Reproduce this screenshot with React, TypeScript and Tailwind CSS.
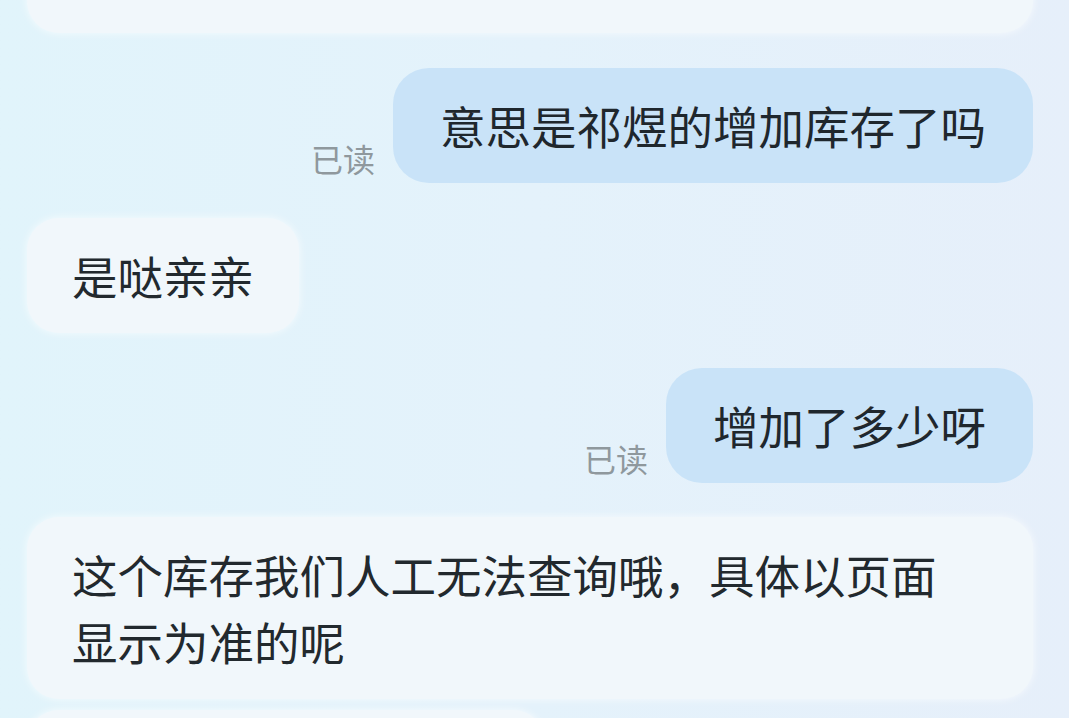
import React from "react";

const font = { fontFamily: '"Noto Sans CJK SC", "Noto Sans", sans-serif' };

function Left({
  children,
  className = "",
  full = false,
  pb = "pb-[24px]",
}: {
  children: React.ReactNode;
  className?: string;
  full?: boolean;
  pb?: string;
}) {
  return (
    <div className={"flex justify-start " + className}>
      <div
        className={
          (full ? "w-full " : "") +
          pb +
          " rounded-[32px] bg-[#f1f7fb] px-[45px] pt-[24px] text-[45.5px] leading-[67px] text-[#22292e] shadow-[0_0_8px_rgba(255,255,255,0.7)]"
        }
      >
        {children}
      </div>
    </div>
  );
}

function Right({ children, className = "" }: { children: React.ReactNode; className?: string }) {
  return (
    <div className={"flex items-end justify-end gap-[18px] " + className}>
      <span className="mb-[5px] text-[32px] leading-[40px] text-[#8f989d]">已读</span>
      <div className="rounded-[36px] bg-[#c9e3f8] px-[47px] py-[24px] text-[45.5px] leading-[67px] text-[#1f272d]">
        {children}
      </div>
    </div>
  );
}

export default function App() {
  return (
    <div
      style={font}
      className="h-[718px] w-[1069px] overflow-hidden bg-gradient-to-r from-[#e1f4fb] via-[#e4f2fb] to-[#e6effa]"
    >
      <div className="flex flex-col pl-[27px] pr-[36px]">
        <Left className="-mt-[87px]" full pb="pb-[29px]">
          好的亲亲，
        </Left>
        <Right className="mt-[35px]">意思是祁煜的增加库存了吗</Right>
        <Left className="mt-[35px]">是哒亲亲</Left>
        <Right className="mt-[35px]">增加了多少呀</Right>
        <Left className="mt-[34px]" full>
          <div className="w-[870px]">这个库存我们人工无法查询哦，具体以页面显示为准的呢</div>
        </Left>
        <Left className="mt-[11px]">
          <div className="w-[428px]">亲亲</div>
        </Left>
      </div>
    </div>
  );
}
